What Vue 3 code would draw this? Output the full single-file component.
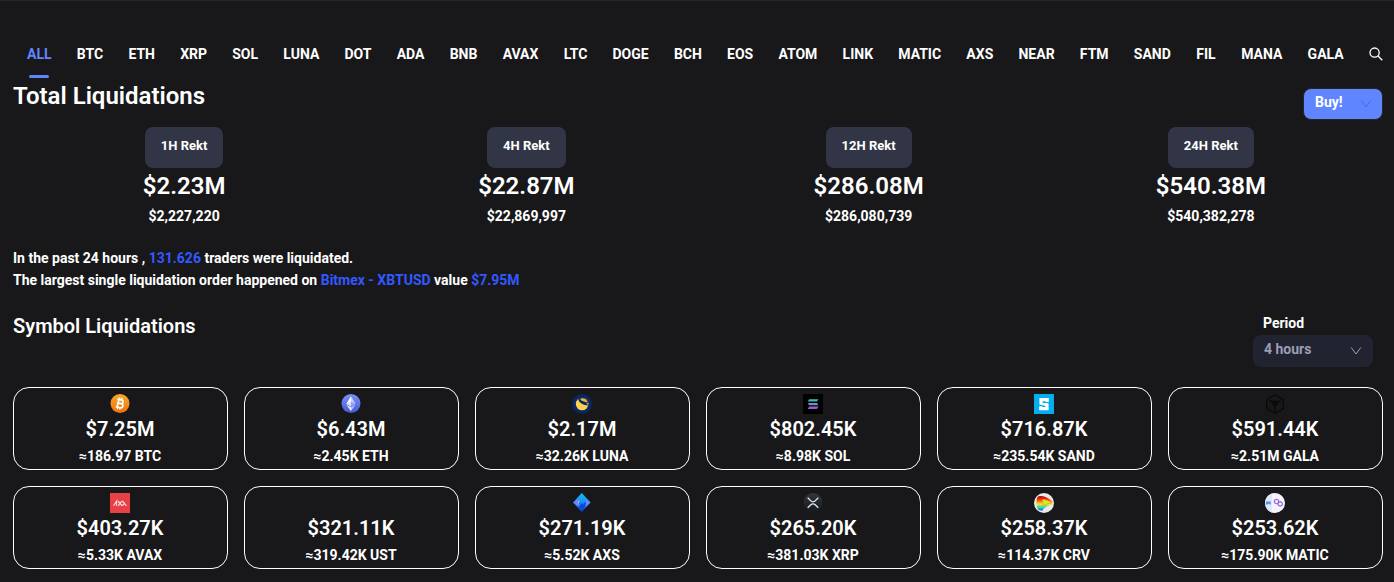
<script setup>
import { ref } from 'vue'

const symbols = ['ALL', 'BTC', 'ETH', 'XRP', 'SOL', 'LUNA', 'DOT', 'ADA', 'BNB', 'AVAX', 'LTC', 'DOGE', 'BCH', 'EOS', 'ATOM', 'LINK', 'MATIC', 'AXS', 'NEAR', 'FTM', 'SAND', 'FIL', 'MANA', 'GALA']
const active = ref('ALL')
const period = ref('4 hours')

const totals = [
  { label: '1H Rekt', short: '$2.23M', full: '$2,227,220' },
  { label: '4H Rekt', short: '$22.87M', full: '$22,869,997' },
  { label: '12H Rekt', short: '$286.08M', full: '$286,080,739' },
  { label: '24H Rekt', short: '$540.38M', full: '$540,382,278' },
]

const coins = [
  { id: 'BTC', value: '$7.25M', amount: '≈186.97 BTC' },
  { id: 'ETH', value: '$6.43M', amount: '≈2.45K ETH' },
  { id: 'LUNA', value: '$2.17M', amount: '≈32.26K LUNA' },
  { id: 'SOL', value: '$802.45K', amount: '≈8.98K SOL' },
  { id: 'SAND', value: '$716.87K', amount: '≈235.54K SAND' },
  { id: 'GALA', value: '$591.44K', amount: '≈2.51M GALA' },
  { id: 'AVAX', value: '$403.27K', amount: '≈5.33K AVAX' },
  { id: 'UST', value: '$321.11K', amount: '≈319.42K UST' },
  { id: 'AXS', value: '$271.19K', amount: '≈5.52K AXS' },
  { id: 'XRP', value: '$265.20K', amount: '≈381.03K XRP' },
  { id: 'CRV', value: '$258.37K', amount: '≈114.37K CRV' },
  { id: 'MATIC', value: '$253.62K', amount: '≈175.90K MATIC' },
]
</script>

<template>
  <main class="page">
    <nav class="tabs" aria-label="Symbols">
      <button
        v-for="s in symbols"
        :key="s"
        type="button"
        class="tab"
        :class="{ active: s === active }"
        @click="active = s"
      >{{ s }}</button>
      <button type="button" class="tab search" aria-label="Search">
        <svg width="14" height="14" viewBox="0 0 14 14" fill="none" stroke="currentColor" stroke-width="1.3">
          <circle cx="5.6" cy="5.6" r="4.6" />
          <path d="M9 9l4.3 4.3" />
        </svg>
      </button>
    </nav>

    <header class="title-row">
      <h1>Total Liquidations</h1>
      <div class="select buy">
        <select aria-label="Buy">
          <option>Buy!</option>
        </select>
        <svg class="chevron" width="12" height="12" viewBox="0 0 12 12" fill="none" stroke="currentColor">
          <path d="M1.2 2.5L6 9l4.8-6.5" />
        </svg>
      </div>
    </header>

    <section class="totals">
      <div v-for="t in totals" :key="t.label" class="total">
        <button type="button" class="badge">{{ t.label }}</button>
        <strong class="total-short">{{ t.short }}</strong>
        <span class="total-full">{{ t.full }}</span>
      </div>
    </section>

    <p class="summary">
      In the past 24 hours , <span class="accent">131.626</span> traders were liquidated.<br>
      The largest single liquidation order happened on <span class="accent">Bitmex - XBTUSD</span> value <span class="accent">$7.95M</span>
    </p>

    <header class="symbol-row">
      <h2>Symbol Liquidations</h2>
      <div class="period">
        <label for="period">Period</label>
        <div class="select">
          <select id="period" v-model="period">
            <option>1 hour</option>
            <option>4 hours</option>
            <option>12 hours</option>
            <option>24 hours</option>
          </select>
          <svg class="chevron" width="12" height="12" viewBox="0 0 12 12" fill="none" stroke="currentColor">
            <path d="M1.2 2.5L6 9l4.8-6.5" />
          </svg>
        </div>
      </div>
    </header>

    <section class="cards">
      <article v-for="c in coins" :key="c.id" class="card">
        <svg class="icon" width="20" height="20" viewBox="0 0 20 20" aria-hidden="true">
          <defs>
            <linearGradient id="g-btc" x1="0" y1="0" x2="0" y2="1"><stop offset="0" stop-color="#f9aa26" /><stop offset="1" stop-color="#f0700f" /></linearGradient>
            <linearGradient id="g-eth" x1="0" y1="0" x2="0" y2="1"><stop offset="0" stop-color="#7b93f5" /><stop offset="1" stop-color="#4559d8" /></linearGradient>
            <linearGradient id="g-sol" x1="0" y1="0" x2="0" y2="1"><stop offset="0" stop-color="#2fc9a4" /><stop offset=".5" stop-color="#6d92c9" /><stop offset="1" stop-color="#a44ccf" /></linearGradient>
            <linearGradient id="g-axs" x1="0" y1="0" x2="0" y2="1"><stop offset="0" stop-color="#08c4f0" /><stop offset=".5" stop-color="#1c8df5" /><stop offset="1" stop-color="#0636c8" /></linearGradient>
            <linearGradient id="g-xrp" x1="0" y1="0" x2="0" y2="1"><stop offset="0" stop-color="#30373e" /><stop offset="1" stop-color="#181a1e" /></linearGradient>
            <linearGradient id="g-crv" x1="0" y1="0" x2="0" y2="1"><stop offset="0" stop-color="#a80d0d" /><stop offset=".22" stop-color="#ef2b10" /><stop offset=".42" stop-color="#ff9d12" /><stop offset=".56" stop-color="#e9ef2c" /><stop offset=".7" stop-color="#66e46f" /><stop offset=".84" stop-color="#21bfe8" /><stop offset="1" stop-color="#1c48d5" /></linearGradient>
          </defs>
          <g v-if="c.id === 'BTC'">
            <circle cx="10" cy="9.5" r="9.5" fill="url(#g-btc)" />
            <g fill="none" stroke="#fff" stroke-width="1.7" transform="rotate(12 10 9.5)">
              <path d="M6.5 5.6h4.2a1.9 1.9 0 0 1 0 3.8H8m0 0h3.2a2.1 2.1 0 0 1 0 4.2H6.5M8 5.6v8" />
              <path d="M8.6 3.5v2M11 3.5v2M8.6 13.6v2M11 13.6v2" stroke-width="1.2" />
            </g>
          </g>
          <g v-else-if="c.id === 'ETH'">
            <circle cx="10" cy="9.5" r="9.5" fill="url(#g-eth)" />
            <path d="M10 2.2L5.4 9.7 10 12.4z" fill="#fff" />
            <path d="M10 2.2l4.6 7.5-4.6 2.7z" fill="#c5cdf9" />
            <path d="M10 7.7L5.4 9.7 10 12.4z" fill="#d6dcfb" />
            <path d="M10 7.7l4.6 2-4.6 2.7z" fill="#93a2ee" />
            <path d="M5.4 10.8L10 13.5V17z" fill="#fff" />
            <path d="M14.6 10.8L10 13.5V17z" fill="#c5cdf9" />
          </g>
          <g v-else-if="c.id === 'LUNA'">
            <circle cx="10" cy="10" r="10" fill="#0b2660" />
            <circle cx="10.1" cy="10" r="6.3" fill="#fdd24f" />
            <path d="M6.2 5C7.5 9.8 11.5 11 16.2 11.6A6.4 6.4 0 0 0 10.5 3.7C8.8 3.5 7.3 4 6.2 5z" fill="#0b2660" />
            <path d="M8 5c2.2-1.6 6.4-.9 7.6 3.4C12.6 8 9.5 7.2 8 5z" fill="#e9b84a" />
            <path d="M14 9.3l2.4-.5-.2 2.6z" fill="#f17a32" />
          </g>
          <g v-else-if="c.id === 'SOL'">
            <rect width="20" height="20" fill="#000" />
            <path d="M6.2 5.2h9.3L14 7.5H4.7zM4.7 8.9H14l1.5 2.3H6.2zM6.2 12.6h9.3L14 14.9H4.7z" fill="url(#g-sol)" />
          </g>
          <g v-else-if="c.id === 'SAND'">
            <rect width="20" height="20" fill="#03adef" />
            <path d="M13.2 7.9V5.6H7v3.6l6 1.5v3.9H6.7v-2.4" fill="none" stroke="#fff" stroke-width="3.2" />
          </g>
          <g v-else-if="c.id === 'GALA'" fill="none" stroke="#0a0a0b" stroke-width="1.4" stroke-linejoin="round">
            <path d="M10 .9l8.3 4.7v9L10 19.3l-8.3-4.7v-9z" />
            <path d="M4.4 6.6L10 10l5.6-3.4M10 10v9M5.8 7.5h8.4M7.4 9.4L10 12.6l2.6-3.2" />
          </g>
          <g v-else-if="c.id === 'AVAX'">
            <rect width="20" height="20" fill="#e84145" />
            <path d="M3.6 12.8l3-4.8v4.8M8 8l4.2 4.8M8.2 12.8L11.8 8M12.4 8l4 4.8M12.6 12.6l1.2-1.8" fill="none" stroke="#fbd9da" stroke-width="1.2" />
          </g>
          <g v-else-if="c.id === 'AXS'">
            <path d="M9.7 0l9 9.5-9 9.5-8.7-9.5z" fill="url(#g-axs)" />
            <path d="M1.6 9.4l4.7-3.2v7.5zM18.2 9.4l-4.7-3.2v7.5z" fill="#7886f5" />
            <path d="M6.3 8.2c-.6 3.4.5 5.5 3 8.3 3.8-2.4 5-4.6 4.1-8.3l-2.4 4-1-3-1 3z" fill="#0648dc" />
            <path d="M7 7.6c-.6 1.8-.5 3.6.4 5" fill="none" stroke="#a7d8ff" stroke-width=".9" />
          </g>
          <g v-else-if="c.id === 'XRP'">
            <circle cx="10" cy="9.5" r="9.5" fill="url(#g-xrp)" />
            <path d="M4.7 4.8l3.1 3.1a3.1 3.1 0 0 0 4.4 0l3.1-3.1M4.7 14.8l3.1-3.1a3.1 3.1 0 0 1 4.4 0l3.1 3.1" fill="none" stroke="#e8eaec" stroke-width="1.3" />
          </g>
          <g v-else-if="c.id === 'CRV'">
            <circle cx="10" cy="10" r="10" fill="#e9e9e9" />
            <path d="M3.2 4.4C5.5 1.8 12 3 18.3 8.3v3.2C14 12.4 10.4 14 8.5 17.4c-3.3.6-4.8-.8-5.2-2.5C2.4 11.5 2 8.5 3.2 4.4z" fill="url(#g-crv)" />
            <path d="M8.8 6.6c3 .1 6 1.2 8.7 3.2-3.2.8-6.2 1.6-8.7 2.8z" fill="#c9ee3c" stroke="#ffa216" stroke-width=".8" />
          </g>
          <g v-else-if="c.id === 'MATIC'">
            <circle cx="10" cy="10" r="10" fill="#f5f4fd" />
            <path d="M7 .5a10 10 0 0 0 0 19z" fill="#e1e7fa" />
            <path d="M1 8.5h4.8v3.1H4.6l-1-1.2-1 1.2H1z" fill="#429be9" />
            <g fill="none" stroke="#9a6be0" stroke-width="1.3" stroke-linejoin="round">
              <path d="M11.5 6.2l2 1.1v2.4l-2 1.1-2-1.1V7.3zM15.2 8.6l2 1.1v2.4l-2 1.1-2-1.1V9.7z" />
            </g>
          </g>
        </svg>
        <strong class="card-value">{{ c.value }}</strong>
        <span class="card-amount">{{ c.amount }}</span>
      </article>
    </section>
  </main>
</template>

<style>
body {
  margin: 0;
  background: #18181a;
}
</style>

<style scoped>
.page {
  box-sizing: border-box;
  min-height: 100vh;
  padding: 30px 11px 11px 13px;
  border-top: 1px solid #22242f;
  background: #18181a;
  color: #fff;
  font-family: Roboto, "Liberation Sans", sans-serif;
  font-size: 14px;
  font-weight: 700;
}

button,
select {
  font: inherit;
  color: inherit;
  border: 0;
  cursor: pointer;
}

.tabs {
  display: flex;
  justify-content: space-between;
  padding-left: 14px;
}

.tab {
  display: flex;
  flex-direction: column;
  align-items: center;
  justify-content: space-between;
  height: 47px;
  padding: 12px 0 0;
  background: none;
  line-height: 22px;
  white-space: nowrap;
}

.tab::after {
  content: "";
  width: 20px;
  height: 3px;
  border-radius: 2px;
}

.tab.active {
  color: #5f85ff;
}

.tab.active::after {
  background: #5f85ff;
}

.search::after {
  display: none;
}

.search svg {
  display: block;
  margin-top: 4px;
}

.title-row {
  display: flex;
  justify-content: space-between;
  align-items: flex-end;
  height: 42px;
}

h1,
h2,
p {
  margin: 0;
}

h1 {
  align-self: flex-start;
  font-size: 24px;
  font-weight: 600;
  line-height: 36px;
}

.select {
  position: relative;
}

.select select {
  display: block;
  width: 100%;
  height: 32px;
  padding: 0 28px 4px 11px;
  appearance: none;
  border-radius: 8px;
  background: #212330;
  color: #9a9fb4;
}

.chevron {
  position: absolute;
  right: 11px;
  top: 10px;
  color: #9a9fb4;
  pointer-events: none;
}

.buy {
  width: 80px;
}

.buy select {
  border: 1px solid #22242f;
  background: #5f85ff;
  color: #fff;
}

.buy .chevron {
  color: #4a6be0;
}

.totals {
  display: grid;
  grid-template-columns: repeat(4, 1fr);
  margin-top: 7px;
  padding-right: 1px;
}

.total {
  display: flex;
  flex-direction: column;
  align-items: center;
}

.badge {
  height: 41px;
  padding: 0 16px 4px;
  border-radius: 8px;
  background: #323545;
  font-size: 13px;
}

.total-short {
  font-size: 24px;
  font-weight: 600;
  line-height: 36px;
}

.total-full {
  line-height: 24px;
}

.summary {
  margin-top: 19px;
  line-height: 22px;
}

.accent {
  color: #3358ff;
}

.symbol-row {
  display: flex;
  justify-content: space-between;
  align-items: flex-start;
  margin-top: 20px;
}

h2 {
  font-size: 20px;
  font-weight: 600;
  line-height: 30px;
}

.period {
  width: 120px;
  margin-right: 10px;
}

.period label {
  display: block;
  padding-left: 10px;
  line-height: 24px;
}

.cards {
  display: grid;
  grid-template-columns: repeat(6, 1fr);
  gap: 16px;
  margin-top: 20px;
}

.card {
  display: flex;
  flex-direction: column;
  align-items: center;
  padding: 6px 1px 1px 0;
  border: 1px solid #fff;
  border-radius: 16px;
}

.card-value {
  font-size: 20px;
  font-weight: 600;
  line-height: 30px;
}

.card-amount {
  line-height: 24px;
}
</style>
